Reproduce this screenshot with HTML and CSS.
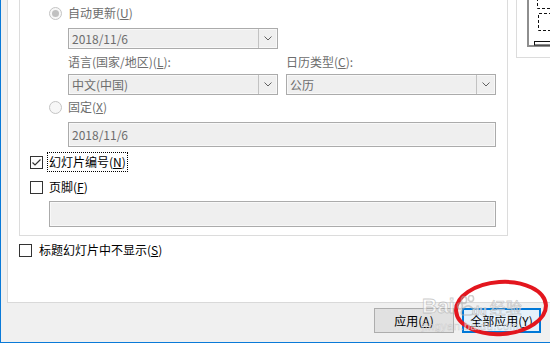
FILE: index.html
```html
<!DOCTYPE html>
<html lang="zh-CN">
<head>
<meta charset="utf-8">
<title>页眉和页脚</title>
<link rel="stylesheet" href="styles.css">
</head>
<body>
<div class="window">
  <div class="panel">
    <div class="left">
      <div class="group">
        <div class="opt-row r-auto">
          <span class="radio checked"></span>
          <span class="text dis">自动更新(<u>U</u>)</span>
        </div>
        <div class="combo combo-date">
          <span class="val">2018/11/6</span>
          <span class="drop"><svg width="8" height="5" viewBox="0 0 8 5"><path d="M0.5 0.5 L4 4 L7.5 0.5" fill="none" stroke="#606060" stroke-width="1"/></svg></span>
        </div>
        <div class="two">
          <div class="col">
            <div class="lbl dis">语言(国家/地区)(<u>L</u>):</div>
            <div class="combo">
              <span class="val">中文(中国)</span>
              <span class="drop"><svg width="8" height="5" viewBox="0 0 8 5"><path d="M0.5 0.5 L4 4 L7.5 0.5" fill="none" stroke="#606060" stroke-width="1"/></svg></span>
            </div>
          </div>
          <div class="col">
            <div class="lbl dis">日历类型(<u>C</u>):</div>
            <div class="combo">
              <span class="val">公历</span>
              <span class="drop"><svg width="8" height="5" viewBox="0 0 8 5"><path d="M0.5 0.5 L4 4 L7.5 0.5" fill="none" stroke="#606060" stroke-width="1"/></svg></span>
            </div>
          </div>
        </div>
        <div class="opt-row r-fixed">
          <span class="radio"></span>
          <span class="text dis">固定(<u>X</u>)</span>
        </div>
        <div class="textbox tb-date"><span class="val">2018/11/6</span></div>
        <div class="chk-row cr-num">
          <span class="check on"><svg width="11" height="11" viewBox="0 0 11 11"><path d="M1.5 5.5 L4 8 L9.5 2.5" fill="none" stroke="#333" stroke-width="1.2"/></svg></span>
          <span class="ctext focus">幻灯片编号(<u>N</u>)</span>
        </div>
        <div class="chk-row cr-foot">
          <span class="check"></span>
          <span class="ctext">页脚(<u>F</u>)</span>
        </div>
        <div class="textbox tb-foot"></div>
      </div>
      <div class="chk-row cr-title">
        <span class="check"></span>
        <span class="ctext">标题幻灯片中不显示(<u>S</u>)</span>
      </div>
    </div>
    <div class="right">
      <div class="preview">
        <svg width="40" height="57" viewBox="0 0 40 57">
          <rect x="11" y="-4" width="40" height="50" fill="#fff" stroke="#8e8e8e" stroke-width="2"/>
          <path d="M20.5 -2 V8.5 H40" fill="none" stroke="#111" stroke-width="1" stroke-dasharray="3 2"/>
          <path d="M40 13.5 H21.5 V30.5 H40" fill="none" stroke="#111" stroke-width="1" stroke-dasharray="3 2"/>
          <rect x="17.5" y="41.5" width="30" height="3.5" fill="#fff" stroke="#111" stroke-width="1"/>
        </svg>
      </div>
    </div>
  </div>
  <div class="buttons">
    <button class="btn">应用(<u>A</u>)</button>
    <button class="btn default">全部应用(<u>Y</u>)</button>
  </div>

  <svg class="circle" width="110" height="72" viewBox="0 0 110 72">
    <ellipse cx="56" cy="35" rx="45" ry="26" fill="none" stroke="#e3161e" stroke-width="4" transform="rotate(-4 56 35)"/>
  </svg>
  <div class="watermark">
    <div class="wm-top">
      <span class="wm-bai">Bai</span>
      <svg class="wm-paw" width="34" height="22" viewBox="0 0 34 22">
        <g fill="none" stroke="rgba(170,170,170,0.55)" stroke-width="1.6">
          <ellipse cx="8" cy="5" rx="2.6" ry="3.4"/>
          <ellipse cx="15" cy="3.5" rx="2.6" ry="3"/>
          <ellipse cx="4" cy="11" rx="2.4" ry="3"/>
          <path d="M7 20 C4 20 5 14 9 12 C12 10 15 11 17 14 C19 17 17 20 14 20 Z"/>
        </g>
        <text x="16" y="20" font-family="Liberation Sans, Arial, sans-serif" font-size="12" font-weight="bold" fill="rgba(255,255,255,0.7)" stroke="rgba(160,160,160,0.55)" stroke-width="0.8">du</text>
      </svg>
      <span class="wm-jy">经验</span>
    </div>
    <div class="wm-url">jingyan.baidu.com</div>
  </div>
</div>
</body>
</html>
```

FILE: styles.css
```css
* { box-sizing: border-box; }
html, body { margin: 0; padding: 0; }
body {
  width: 550px;
  height: 344px;
  overflow: hidden;
  background: #ffffff;
  font-family: "Noto Sans CJK SC", "Microsoft YaHei", sans-serif;
  font-size: 12px;
  color: #000;
}
u { text-decoration: underline; text-underline-offset: 1px; }

.window {
  position: relative;
  width: 550px;
  height: 343px;
  background: #f0f0f0;
  border-left: 1px solid #0a7ad8;
  border-bottom: 1px solid #0a7ad8;
  overflow: hidden;
}

.panel {
  margin-left: 6px;
  width: 560px;
  height: 303px;
  background: #fff;
  border-left: 1px solid #d9d9d9;
  border-bottom: 1px solid #d9d9d9;
  display: flex;
}

.left { padding-left: 11px; width: 500px; flex: none; }

.group {
  width: 489px;
  height: 236px;
  border: 1px solid #dcdcdc;
  border-top: none;
  padding-top: 4px;
}

.dis { color: #6d6d6d; }

.opt-row {
  display: flex;
  align-items: center;
  height: 18px;
  padding-left: 29px;
}
.opt-row .text { margin-left: 6px; line-height: 18px; }
.r-fixed { margin-top: 3px; }

.radio {
  width: 13px;
  height: 13px;
  border-radius: 50%;
  border: 1px solid #c4c4c4;
  background: #f7f7f7;
  display: flex;
  align-items: center;
  justify-content: center;
  flex: none;
}
.radio.checked::after {
  content: "";
  width: 7px;
  height: 7px;
  border-radius: 50%;
  background: #c0c0c0;
}

.combo {
  width: 210px;
  height: 21px;
  border: 1px solid #ababab;
  background: #efefef;
  box-shadow: inset 0 0 0 1px #f8f8f8;
  display: flex;
  align-items: center;
  color: #6d6d6d;
}
.combo .val { flex: 1; padding-left: 3px; line-height: 19px; }
.combo .drop {
  width: 19px;
  height: 19px;
  border-left: 1px solid #c2c2c2;
  display: flex;
  align-items: center;
  justify-content: center;
}
.combo-date { margin-left: 48px; margin-top: 6px; }

.two {
  display: flex;
  gap: 8px;
  margin-left: 48px;
  margin-top: 5px;
}
.two .lbl { height: 16px; line-height: 16px; margin-bottom: 4px; }

.textbox {
  height: 25px;
  border: 1px solid #ababab;
  background: #efefef;
  box-shadow: inset 0 0 0 1px #f8f8f8;
  display: flex;
  align-items: center;
  color: #6d6d6d;
}
.textbox .val { padding-left: 3px; }
.tb-date { margin-left: 48px; width: 428px; margin-top: 6px; }
.tb-foot { margin-left: 29px; width: 447px; margin-top: 4px; height: 26px; }

.chk-row {
  display: flex;
  align-items: center;
  height: 20px;
}
.group .chk-row { padding-left: 10px; }
.cr-num { margin-top: 5px; }
.cr-foot { margin-top: 5px; }
.cr-title { margin-top: 4px; }

.check {
  width: 13px;
  height: 13px;
  border: 1px solid #333;
  background: #fff;
  flex: none;
  display: flex;
  align-items: center;
  justify-content: center;
}
.ctext {
  margin-left: 4px;
  padding: 0 1px;
  border: 1px solid transparent;
  height: 20px;
  line-height: 18px;
}
.cr-title .ctext { margin-left: 5px; }
.ctext.focus { border: 1px dotted #000; }

.right { padding-left: 8px; }
.preview {
  width: 60px;
  height: 58px;
  border-left: 1px solid #dcdcdc;
  border-bottom: 1px solid #dcdcdc;
}
.preview svg { display: block; }

.buttons {
  display: flex;
  justify-content: flex-end;
  gap: 8px;
  padding-right: 9px;
  margin-top: 5px;
}
.btn {
  width: 80px;
  height: 25px;
  border: 1px solid #adadad;
  background: #e1e1e1;
  font-family: "Noto Sans CJK SC", "Microsoft YaHei", sans-serif;
  font-size: 12px;
  color: #000;
  padding: 0;
  line-height: 22px;
}
.btn.default {
  width: 79px;
  border: 1px solid #0078d7;
  background: #e5f1fb;
  box-shadow: inset 0 0 0 1px #0078d7;
}

.circle {
  position: absolute;
  left: 444px;
  top: 273px;
}

.watermark {
  position: absolute;
  left: 421px;
  top: 293px;
  width: 114px;
  pointer-events: none;
}
.wm-top { display: flex; align-items: flex-end; height: 24px; }
.wm-bai {
  font-family: "Liberation Sans", Arial, sans-serif;
  font-weight: bold;
  font-size: 21px;
  line-height: 22px;
  color: rgba(255, 255, 255, 0.65);
  -webkit-text-stroke: 0.8px rgba(160, 160, 160, 0.55);
}
.wm-paw { margin-left: 1px; flex: none; }
.wm-jy {
  font-size: 16px;
  line-height: 20px;
  color: rgba(255, 255, 255, 0.65);
  -webkit-text-stroke: 0.7px rgba(160, 160, 160, 0.55);
  margin-left: 0;
}
.wm-url {
  font-family: "Liberation Sans", Arial, sans-serif;
  font-size: 11px;
  line-height: 12px;
  letter-spacing: 0.5px;
  margin-top: 3px;
  color: rgba(255, 255, 255, 0.6);
  -webkit-text-stroke: 0.5px rgba(170, 170, 170, 0.5);
}
```
